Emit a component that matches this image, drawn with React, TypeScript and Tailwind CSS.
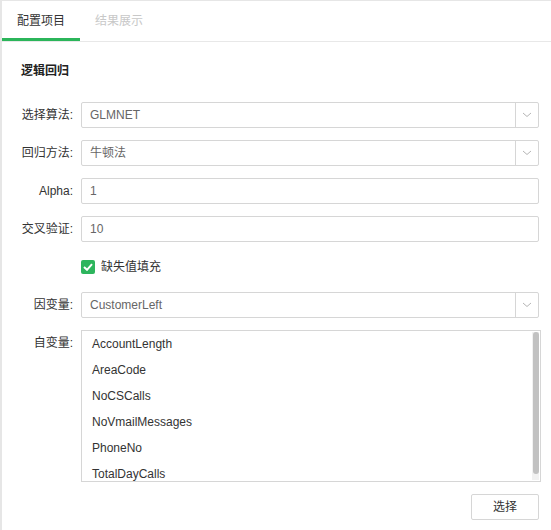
import React from "react";

const font = { fontFamily: '"Liberation Sans", Arial, "Noto Sans CJK SC", sans-serif' };

function Chevron() {
  return (
    <svg width="10" height="6" viewBox="0 0 10 6" fill="none">
      <polyline points="1,1 5,4.5 9,1" stroke="#b5b5b5" strokeWidth="1" />
    </svg>
  );
}

function Row({ label, children }: { label: string; children: React.ReactNode }) {
  return (
    <div className="flex items-start">
      <div className="w-[60px] h-[26px] flex items-center justify-end pr-[8px] text-[12px] text-[#333]">{label}</div>
      {children}
    </div>
  );
}

function SelectBox({ value }: { value: string }) {
  return (
    <div className="w-[458px] h-[26px] border border-[#d6d6d6] rounded-[2px] flex bg-white">
      <div className="flex-1 flex items-center pl-[8px] text-[12px] text-[#666]">{value}</div>
      <div className="w-[23px] border-l border-[#d6d6d6] flex items-center justify-center">
        <Chevron />
      </div>
    </div>
  );
}

function InputBox({ value }: { value: string }) {
  return (
    <div className="w-[458px] h-[26px] border border-[#d6d6d6] rounded-[2px] flex items-center pl-[8px] text-[12px] text-[#666] bg-white">
      {value}
    </div>
  );
}

export default function App() {
  const items = ["AccountLength", "AreaCode", "NoCSCalls", "NoVmailMessages", "PhoneNo", "TotalDayCalls"];
  return (
    <div style={font} className="w-[551px] h-[530px] bg-white border-t border-l-2 border-[#e6e6e6] overflow-hidden">
      <div className="h-[41px] border-b border-[#e8e8e8] flex">
        <div className="relative px-[15px] w-[78px] flex items-center text-[12px] text-[#333]">
          配置项目
          <div className="absolute left-0 right-0 bottom-0 h-[3px] bg-[#2bb55a]" />
        </div>
        <div className="px-[15px] flex items-center text-[12px] text-[#c8c8c8]">结果展示</div>
      </div>
      <div className="pl-[19px] pt-[21px]">
        <div className="pl-[0px] text-[12px] font-bold text-[#222] leading-[16px]">逻辑回归</div>
        <div className="mt-[23px] flex flex-col gap-[12px]">
          <Row label="选择算法:">
            <SelectBox value="GLMNET" />
          </Row>
          <Row label="回归方法:">
            <SelectBox value="牛顿法" />
          </Row>
          <Row label="Alpha:">
            <InputBox value="1" />
          </Row>
          <Row label="交叉验证:">
            <InputBox value="10" />
          </Row>
          <div className="flex h-[26px] items-center pl-[60px]">
            <div className="w-[14px] h-[14px] rounded-[2px] bg-[#2db55d] flex items-center justify-center">
              <svg width="10" height="8" viewBox="0 0 10 8" fill="none">
                <polyline points="1,4 4,6.8 9,1.2" stroke="white" strokeWidth="2" />
              </svg>
            </div>
            <span className="ml-[6px] text-[12px] text-[#333]">缺失值填充</span>
          </div>
          <Row label="因变量:">
            <SelectBox value="CustomerLeft" />
          </Row>
          <Row label="自变量:">
            <div className="relative w-[460px] h-[152px] border border-[#d6d6d6] overflow-hidden bg-white">
              {items.map((it) => (
                <div key={it} className="h-[26px] flex items-center pl-[10px] text-[12px] text-[#333]">
                  {it}
                </div>
              ))}
              <div className="absolute right-[1px] top-[1px] bottom-[1px] w-[7px] bg-[#f1f1f1]">
                <div className="h-[142px] w-[6px] mx-auto rounded-[3px] bg-[#c1c1c1]" />
              </div>
            </div>
          </Row>
          <div className="flex justify-end pr-[12px]">
            <div className="w-[68px] h-[26px] border border-[#d6d6d6] rounded-[2px] flex items-center justify-center text-[12px] text-[#333]">
              选择
            </div>
          </div>
        </div>
      </div>
    </div>
  );
}
